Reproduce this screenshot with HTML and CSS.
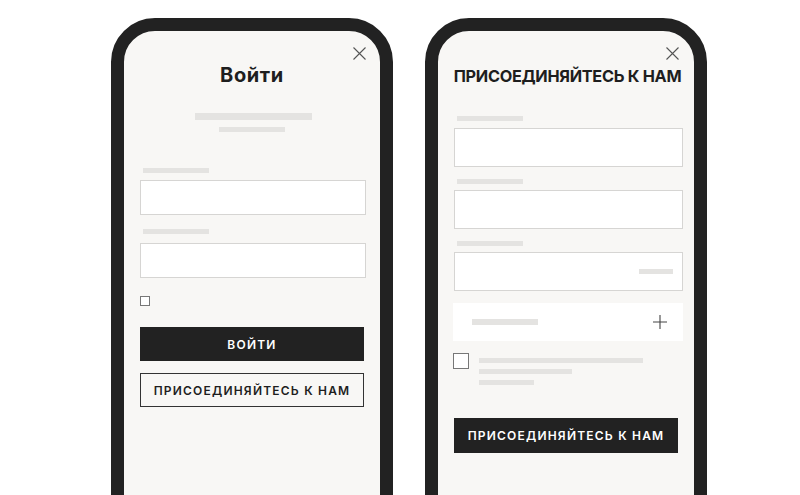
FILE: index.html
```html
<!DOCTYPE html>
<html lang="ru">
<head>
<meta charset="utf-8">
<link rel="stylesheet" href="styles.css">
</head>
<body>
<div class="stage">
  <div class="phone">
    <div class="screen login">
      <div class="close">
        <svg width="13" height="13" viewBox="0 0 13 13"><path d="M0.5 0.5L12.5 12.5M12.5 0.5L0.5 12.5" stroke="#555" stroke-width="1.1" fill="none"/></svg>
      </div>
      <h1 class="title">Войти</h1>
      <div class="intro">
        <div class="bar bar-intro1"></div>
        <div class="bar bar-intro2"></div>
      </div>
      <div class="bar label"></div>
      <div class="input"></div>
      <div class="bar label"></div>
      <div class="input"></div>
      <div class="check-small"></div>
      <div class="btn btn-dark btn-login">ВОЙТИ</div>
      <div class="btn btn-outline">ПРИСОЕДИНЯЙТЕСЬ К НАМ</div>
    </div>
  </div>
  <div class="phone">
    <div class="screen join">
      <div class="close">
        <svg width="13" height="13" viewBox="0 0 13 13"><path d="M0.5 0.5L12.5 12.5M12.5 0.5L0.5 12.5" stroke="#555" stroke-width="1.1" fill="none"/></svg>
      </div>
      <h1 class="title title-caps">ПРИСОЕДИНЯЙТЕСЬ К НАМ</h1>
      <div class="bar label"></div>
      <div class="input input-tall"></div>
      <div class="bar label"></div>
      <div class="input input-tall"></div>
      <div class="bar label"></div>
      <div class="input input-tall input-suffix"><div class="bar bar-suffix"></div></div>
      <div class="accordion">
        <div class="bar bar-acc"></div>
        <svg width="14" height="14" viewBox="0 0 14 14"><path d="M7 0V14M0 7H14" stroke="#444" stroke-width="1.1" fill="none"/></svg>
      </div>
      <div class="consent">
        <div class="check-big"></div>
        <div class="consent-lines">
          <div class="bar bar-c1"></div>
          <div class="bar bar-c2"></div>
          <div class="bar bar-c3"></div>
        </div>
      </div>
      <div class="btn btn-dark btn-join">ПРИСОЕДИНЯЙТЕСЬ К НАМ</div>
    </div>
  </div>
</div>
</body>
</html>
```

FILE: styles.css
```css
html, body {
  margin: 0;
  padding: 0;
  background: #ffffff;
  overflow: hidden;
  height: 495px;
}
body {
  font-family: Inter, "Noto Sans", sans-serif;
  color: #1e1e1e;
}
.stage {
  display: flex;
  gap: 32px;
  padding: 18px 0 0 111px;
}
.phone {
  width: 282px;
  height: 520px;
  box-sizing: border-box;
  border: 13px solid #222222;
  border-radius: 44px;
  background: #f8f7f5;
  overflow: hidden;
}
.screen {
  position: relative;
  display: flex;
  flex-direction: column;
  padding: 0 16px;
  height: 100%;
  box-sizing: border-box;
}
.close {
  position: absolute;
  top: 16px;
  right: 14px;
  width: 13px;
  height: 13px;
  line-height: 0;
}
.join .close { right: 15px; }
.title {
  margin: 0;
  font-weight: 700;
  text-align: center;
  color: #1e1e1e;
}
.login .title {
  font-size: 20px;
  line-height: 24px;
  margin-top: 32px;
  letter-spacing: 0.6px;
}
.title-caps {
  font-size: 16.3px;
  line-height: 20px;
  margin-top: 35px;
  letter-spacing: -0.3px;
  white-space: nowrap;
  margin-left: -1px;
  margin-right: -4px;
}
.bar {
  background: #e4e3e1;
  height: 5px;
}
.intro {
  display: flex;
  flex-direction: column;
  align-items: center;
  gap: 7px;
  margin-top: 26px;
}
.bar-intro1 { width: 117px; height: 7px; margin-left: 2px; }
.bar-intro2 { width: 66px; }
.label {
  width: 66px;
  margin-left: 3px;
}
.login .label { margin-top: 36px; }
.login .label + .input { margin-top: 7px; }
.login .input + .label { margin-top: 14px; }
.login .input + .label + .input { margin-top: 9px; }
.input {
  background: #ffffff;
  border: 1px solid #d6d5d3;
  height: 35px;
  box-sizing: border-box;
}
.login .input { width: 226px; }
.check-small {
  width: 10px;
  height: 10px;
  box-sizing: border-box;
  border: 1px solid #777;
  background: #fff;
  margin-top: 18px;
}
.btn {
  height: 34px;
  width: 224px;
  box-sizing: border-box;
  display: flex;
  align-items: center;
  justify-content: center;
  font-size: 12px;
  font-weight: 600;
  letter-spacing: 1.2px;
  white-space: nowrap;
}
.btn-dark {
  background: #222222;
  color: #ffffff;
}
.btn-login { margin-top: 21px; }
.btn-outline {
  margin-top: 12px;
  border: 1.5px solid #333;
  color: #1e1e1e;
  background: #f8f7f5;
}
/* join */
.join .title + .label { margin-top: 30px; }
.join .label + .input { margin-top: 6px; }
.join .title + .label + .input { margin-top: 7px; }
.join .input + .label { margin-top: 12px; }
.input-tall { height: 39px; width: 229px; }
.input-suffix {
  display: flex;
  align-items: center;
  justify-content: flex-end;
  padding-right: 9px;
}
.bar-suffix { width: 34px; }
.accordion {
  margin-top: 12px;
  margin-left: -1px;
  width: 230px;
  height: 38px;
  background: #ffffff;
  display: flex;
  align-items: center;
  justify-content: space-between;
  padding: 0 16px 0 19px;
  box-sizing: border-box;
}
.accordion svg { display: block; }
.bar-acc { width: 66px; height: 6px; }
.consent {
  display: flex;
  gap: 10px;
  margin-top: 12px;
  margin-left: -1px;
}
.check-big {
  width: 16px;
  height: 16px;
  box-sizing: border-box;
  border: 1.5px solid #777;
  background: #fff;
  flex: none;
}
.consent-lines {
  display: flex;
  flex-direction: column;
  gap: 6px;
  padding-top: 5px;
}
.bar-c1 { width: 164px; }
.bar-c2 { width: 93px; }
.bar-c3 { width: 55px; }
.btn-join {
  margin-top: 33px;
  height: 35px;
}
```
